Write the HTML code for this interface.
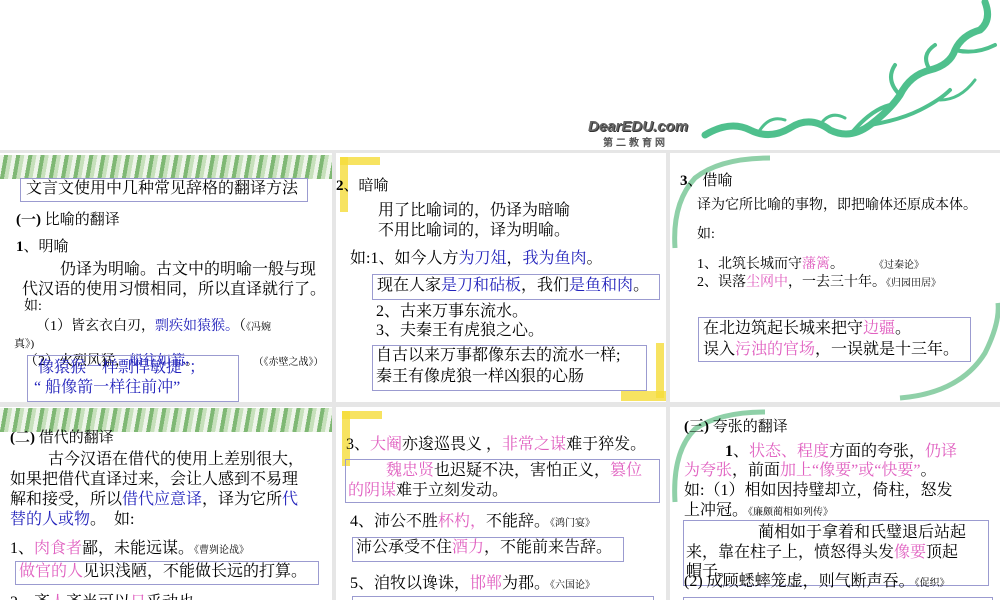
<!DOCTYPE html>
<html><head><meta charset="utf-8"><style>
body{margin:0;width:1000px;height:600px;overflow:hidden;background:#fff;position:relative;font-family:"Liberation Serif","Noto Serif CJK SC","Noto Sans CJK SC",serif;color:#000}
.s{position:absolute;background:#fff;overflow:hidden}
.t{position:absolute;white-space:nowrap;font-size:16px;line-height:20px}
.sm{font-size:10px}
.b{color:#2222bb}.p{color:#e060c0}
.box{position:absolute;border:1px solid #9b9bd0}
.g{position:absolute;left:0;width:332px;height:24px;background:repeating-linear-gradient(100deg,#eef5ea 0 4px,#7fb874 4px 8px,#c6e0bb 8px 12px);}
.y{position:absolute;background:#f5dc3a;opacity:.8}
.logo{position:absolute;font:bold 9px "Liberation Sans",sans-serif;color:#555}
</style></head><body>
<div style="position:absolute;left:0;top:150px;width:1000px;height:450px;background:#e6e6e6"></div>
<!-- top deco -->
<div class="logo" style="left:588px;top:118px;font-size:15px;font-style:italic;color:#666;text-shadow:1px 1px 0 #333">DearEDU.com</div>
<div class="logo" style="left:603px;top:134px;font-size:10px;letter-spacing:3px">第二教育网</div>
<svg style="position:absolute;left:700px;top:0" width="300" height="150"><g stroke="#4fc08d" fill="none" stroke-linecap="round"><path d="M5 135 Q30 120 50 130 Q70 140 90 128 Q110 115 130 130 Q150 140 170 125 Q190 110 200 95 Q210 75 230 70 Q250 65 255 50 Q262 35 280 30 Q292 20 285 2" stroke-width="7"/><path d="M170 125 Q200 120 220 110 Q240 100 250 90 M200 95 Q185 80 195 65 M230 70 Q220 55 235 45 M255 50 Q275 55 295 45 M150 135 Q170 110 190 105" stroke-width="4"/><path d="M240 100 Q260 100 275 80 M60 130 Q70 115 85 120 M120 125 Q130 110 145 118" stroke-width="3"/></g></svg>

<!-- slide 1 -->
<div class="s" style="left:0;top:153px;width:332px;height:249px">
<div class="g" style="top:2px"></div>
<div class="box" style="left:20px;top:25px;width:286px;height:22px"></div>
<div class="t" style="left:26px;top:26px">文言文使用中几种常见辞格的翻译方法</div>
<div class="t" style="left:16px;top:57px;font-size:15px"><b>(一)</b> 比喻的翻译</div>
<div class="t" style="left:16px;top:84px;font-size:15px"><b>1</b>、明喻</div>
<div class="t" style="left:60px;top:107px">仍译为明喻。古文中的明喻一般与现</div>
<div class="t" style="left:22px;top:127px">代汉语的使用习惯相同，所以直译就行了。</div>
<div class="t" style="left:24px;top:144px;font-size:14px">如:</div>
<div class="t" style="left:36px;top:164px;font-size:14px">（1）皆玄衣白刃，<span class="b">剽疾如猿猴。</span>（<span class="sm">《冯婉</span></div>
<div class="t" style="left:14px;top:181px;font-size:11px">真》)</div>
<div class="t" style="left:24px;top:199px;font-size:14px">（2）火烈风猛，<span class="b">船往如箭</span>。 　　　　<span class="sm">（《赤壁之战》）</span></div>
<div class="box" style="left:27px;top:202px;width:210px;height:45px"></div>
<div class="t b" style="left:38px;top:205px">像猿猴一样剽悍敏捷”；</div>
<div class="t b" style="left:34px;top:225px">“ 船像箭一样往前冲”</div>
</div>
<!-- slide 2 -->
<div class="s" style="left:336px;top:153px;width:330px;height:249px">
<div class="y" style="left:4px;top:4px;width:40px;height:8px"></div><div class="y" style="left:4px;top:4px;width:8px;height:55px"></div>
<div class="y" style="left:285px;top:238px;width:45px;height:10px"></div><div class="y" style="left:320px;top:190px;width:8px;height:55px"></div>
<div class="t" style="left:0;top:23px;font-size:15px"><b>2</b>、暗喻</div>
<div class="t" style="left:42px;top:48px">用了比喻词的，仍译为暗喻</div>
<div class="t" style="left:42px;top:68px">不用比喻词的，译为明喻。</div>
<div class="t" style="left:14px;top:96px">如:1、如今人方<span class="b">为刀俎</span>，<span class="b">我为鱼肉</span>。</div>
<div class="box" style="left:36px;top:121px;width:286px;height:24px"></div>
<div class="t" style="left:41px;top:123px">现在人家<span class="b">是刀和砧板</span>，我们<span class="b">是鱼和肉</span>。</div>
<div class="t" style="left:40px;top:149px">2、古来万事东流水。</div>
<div class="t" style="left:40px;top:168px">3、夫秦王有虎狼之心。</div>
<div class="box" style="left:36px;top:192px;width:273px;height:44px"></div>
<div class="t" style="left:40px;top:193px">自古以来万事都像东去的流水一样;</div>
<div class="t" style="left:40px;top:214px">秦王有像虎狼一样凶狠的心肠</div>
</div>
<!-- slide 3 -->
<div class="s" style="left:670px;top:153px;width:330px;height:249px">
<svg style="position:absolute;left:0;top:0" width="330" height="249"><path d="M5 95 Q2 50 25 25 Q50 5 100 5" stroke="#8fd0a8" stroke-width="5" fill="none"/><path d="M230 245 Q290 240 315 200 Q330 170 328 150" stroke="#8fd0a8" stroke-width="5" fill="none"/></svg>
<div class="t" style="left:10px;top:18px;font-size:15px"><b>3</b>、借喻</div>
<div class="t" style="left:27px;top:43px;font-size:14px">译为它所比喻的事物，即把喻体还原成本体。</div>
<div class="t" style="left:27px;top:72px;font-size:14px">如:</div>
<div class="t" style="left:27px;top:102px;font-size:14px">1、北筑长城而守<span class="p">藩篱</span>。　　　<span class="sm">《过秦论》</span></div>
<div class="t" style="left:27px;top:120px;font-size:14px">2、误落<span class="p">尘网中</span>，一去三十年。<span class="sm">《归园田居》</span></div>
<div class="box" style="left:28px;top:164px;width:271px;height:43px"></div>
<div class="t" style="left:33px;top:166px">在北边筑起长城来把守<span class="p">边疆</span>。</div>
<div class="t" style="left:33px;top:187px">误入<span class="p">污浊的官场</span>，一误就是十三年。</div>
</div>
<!-- slide 4 -->
<div class="s" style="left:0;top:407px;width:332px;height:193px">
<div class="g" style="top:1px"></div>
<div class="t" style="left:10px;top:21px;font-size:15px"><b>(二)</b> 借代的翻译</div>
<div class="t" style="left:48px;top:43px">古今汉语在借代的使用上差别很大，</div>
<div class="t" style="left:10px;top:63px">如果把借代直译过来，会让人感到不易理</div>
<div class="t" style="left:10px;top:83px">解和接受，所以<span class="b">借代应意译</span>，译为它所<span class="b">代</span></div>
<div class="t" style="left:10px;top:103px"><span class="b">替的人或物</span>。　如:</div>
<div class="t" style="left:10px;top:132px">1、<span class="p">肉食者</span>鄙，未能远谋。<span class="sm">《曹刿论战》</span></div>
<div class="box" style="left:15px;top:154px;width:302px;height:22px"></div>
<div class="t" style="left:19px;top:155px"><span class="p">做官的人</span>见识浅陋，不能做长远的打算。</div>
<div class="t" style="left:10px;top:186px">2、齐<span class="p">人</span>齐当可以<span class="p">日</span>乎动也</div>
</div>
<!-- slide 5 -->
<div class="s" style="left:336px;top:407px;width:330px;height:193px">
<div class="y" style="left:6px;top:4px;width:40px;height:8px"></div><div class="y" style="left:6px;top:4px;width:8px;height:55px"></div>
<div class="t" style="left:10px;top:28px">3、<span class="p">大阉</span>亦逡巡畏义 ，<span class="p">非常之谋</span>难于猝发。</div>
<div class="box" style="left:9px;top:52px;width:313px;height:42px"></div>
<div class="t" style="left:50px;top:54px"><span class="p">魏忠贤</span>也迟疑不决，害怕正义，<span class="p">篡位</span></div>
<div class="t" style="left:12px;top:74px"><span class="p">的阴谋</span>难于立刻发动。</div>
<div class="t" style="left:14px;top:105px">4、沛公不胜<span class="p">杯杓，</span>不能辞。<span class="sm">《鸿门宴》</span></div>
<div class="box" style="left:16px;top:130px;width:270px;height:23px"></div>
<div class="t" style="left:20px;top:131px">沛公承受不住<span class="p">酒力</span>，不能前来告辞。</div>
<div class="t" style="left:14px;top:167px">5、洎牧以谗诛，<span class="p">邯郸</span>为郡。<span class="sm">《六国论》</span></div>
<div class="box" style="left:16px;top:189px;width:300px;height:20px"></div>
</div>
<!-- slide 6 -->
<div class="s" style="left:670px;top:407px;width:330px;height:193px">
<svg style="position:absolute;left:0;top:0" width="330" height="193"><path d="M5 95 Q2 45 25 22 Q50 5 95 5" stroke="#8fd0a8" stroke-width="5" fill="none"/></svg>
<div class="t" style="left:14px;top:10px;font-size:15px"><b>(三)</b> 夸张的翻译</div>
<div class="t" style="left:55px;top:35px"><b>1</b>、<span class="p">状态、程度</span>方面的夸张，<span class="p">仍译</span></div>
<div class="t" style="left:14px;top:54px"><span class="p">为夸张</span>，前面<span class="p">加上“像要”或“快要”</span>。</div>
<div class="t" style="left:14px;top:74px">如:（1）相如因持璧却立，倚柱，怒发</div>
<div class="t" style="left:14px;top:94px">上冲冠。<span class="sm">《廉颇蔺相如列传》</span></div>
<div class="box" style="left:13px;top:113px;width:304px;height:64px"></div>
<div class="t" style="left:88px;top:116px">蔺相如于拿着和氏璧退后站起</div>
<div class="t" style="left:16px;top:136px">来，靠在柱子上，愤怒得头发<span class="p">像要</span>顶起</div>
<div class="t" style="left:16px;top:155px">帽子。</div>
<div class="t" style="left:14px;top:165px">(2) 成顾蟋蟀笼虚，则气断声吞。<span class="sm">《促织》</span></div>
<div class="box" style="left:13px;top:190px;width:308px;height:20px"></div>
</div>
</body></html>
